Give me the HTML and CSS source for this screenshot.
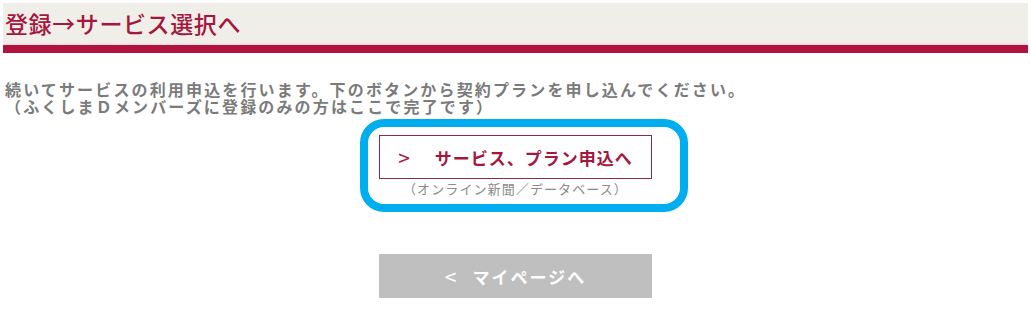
FILE: index.html
```html
<!DOCTYPE html>
<html lang="ja">
<head>
<meta charset="utf-8">
<title>登録→サービス選択へ</title>
<link rel="stylesheet" href="styles.css">
</head>
<body>
<header class="page-head">
  <h1 class="page-title">登録→サービス選択へ</h1>
</header>
<main class="content">
  <p class="lead">続いてサービスの利用申込を行います。下のボタンから契約プランを申し込んでください。<br>（ふくしまＤメンバーズに登録のみの方はここで完了です）</p>
  <div class="actions">
    <div class="primary-wrap">
      <a class="btn btn-primary" href="#"><span class="chev">&gt;</span><span>サービス、プラン申込へ</span></a>
      <p class="caption">（オンライン新聞／データベース）</p>
      <span class="highlight" aria-hidden="true"></span>
    </div>
    <a class="btn btn-back" href="#"><span class="chev">&lt;</span><span>マイページへ</span></a>
  </div>
</main>
</body>
</html>
```
FILE: styles.css
```css
html, body {
  margin: 0;
  padding: 0;
  background: #ffffff;
}
body {
  padding: 3px;
  font-family: "Noto Sans CJK JP", "Noto Sans", sans-serif;
}
.page-head {
  background: #f0eee9;
  height: 42px;
  border-bottom: 8px solid #b0133d;
  box-shadow: inset 0 -2px 0 #f7dfe4;
  display: flex;
  align-items: center;
}
.page-title {
  margin: 0;
  padding-left: 2px;
  font-size: 23px;
  font-weight: 500;
  color: #a5173e;
  letter-spacing: 0.6px;
  line-height: 1;
  position: relative;
  top: -1px;
}
.content {
  padding-top: 28px;
}
.lead {
  margin: 0;
  padding-left: 2px;
  font-size: 16px;
  line-height: 17px;
  font-weight: 700;
  color: #7b7b7b;
  letter-spacing: 2.15px;
}
.actions {
  display: flex;
  flex-direction: column;
  align-items: center;
  padding-top: 20px;
}
.primary-wrap {
  position: relative;
  display: flex;
  flex-direction: column;
  align-items: center;
}
.btn {
  box-sizing: border-box;
  width: 273px;
  height: 44px;
  display: flex;
  align-items: center;
  justify-content: center;
  text-decoration: none;
  font-size: 17px;
  font-weight: 700;
  letter-spacing: 1px;
}
.btn .chev {
  margin-right: 24px;
  font-weight: 400;
  font-size: 21px;
  line-height: 1;
}
.btn-primary {
  border: 1px solid #8e2a50;
  color: #a5173e;
  background: #ffffff;
}
.caption {
  margin: 2px 0 0;
  font-size: 13px;
  line-height: 16px;
  color: #8a8a8a;
  letter-spacing: 1.1px;
}
.highlight {
  position: absolute;
  left: -19px;
  right: -36px;
  top: -16px;
  bottom: -15px;
  border: 8px solid #00adee;
  border-radius: 24px;
  pointer-events: none;
}
.btn-back {
  margin-top: 57px;
  background: #bfbfbf;
  color: #ffffff;
  font-size: 17px;
  letter-spacing: 2px;
}
.btn-back .chev {
  margin-right: 14px;
}
```
